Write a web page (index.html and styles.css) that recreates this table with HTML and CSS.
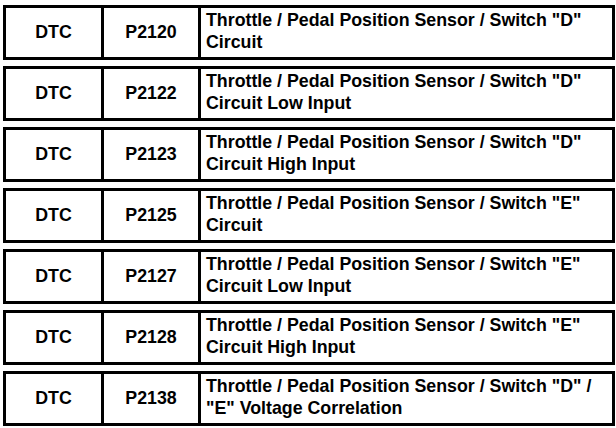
FILE: index.html
```html
<!DOCTYPE html>
<html lang="en">
<head>
<meta charset="utf-8">
<title>DTC list</title>
<link rel="stylesheet" href="styles.css">
</head>
<body>
<div class="dtc-list">
  <div class="dtc-row">
    <div class="cell label">DTC</div>
    <div class="cell code">P2120</div>
    <div class="cell desc">Throttle / Pedal Position Sensor / Switch "D" Circuit</div>
  </div>
  <div class="dtc-row">
    <div class="cell label">DTC</div>
    <div class="cell code">P2122</div>
    <div class="cell desc">Throttle / Pedal Position Sensor / Switch "D" Circuit Low Input</div>
  </div>
  <div class="dtc-row">
    <div class="cell label">DTC</div>
    <div class="cell code">P2123</div>
    <div class="cell desc">Throttle / Pedal Position Sensor / Switch "D" Circuit High Input</div>
  </div>
  <div class="dtc-row">
    <div class="cell label">DTC</div>
    <div class="cell code">P2125</div>
    <div class="cell desc">Throttle / Pedal Position Sensor / Switch "E" Circuit</div>
  </div>
  <div class="dtc-row">
    <div class="cell label">DTC</div>
    <div class="cell code">P2127</div>
    <div class="cell desc">Throttle / Pedal Position Sensor / Switch "E" Circuit Low Input</div>
  </div>
  <div class="dtc-row">
    <div class="cell label">DTC</div>
    <div class="cell code">P2128</div>
    <div class="cell desc">Throttle / Pedal Position Sensor / Switch "E" Circuit High Input</div>
  </div>
  <div class="dtc-row">
    <div class="cell label">DTC</div>
    <div class="cell code">P2138</div>
    <div class="cell desc">Throttle / Pedal Position Sensor / Switch "D" / "E" Voltage Correlation</div>
  </div>
</div>
</body>
</html>
```
FILE: styles.css
```css
* { box-sizing: border-box; }
html, body { background: #fff; }
body {
  margin: 0;
  padding: 5px 0 0 3px;
  font-family: "Liberation Sans", Arial, sans-serif;
  font-weight: bold;
  font-size: 17.8px;
  color: #000;
}
.dtc-list {
  display: flex;
  flex-direction: column;
  gap: 6px;
  width: 612px;
}
.dtc-row {
  display: grid;
  grid-template-columns: 95px 97px 1fr;
  height: 55px;
  border: 3px solid #000;
}
.cell {
  display: flex;
  align-items: center;
  justify-content: center;
}
.code, .desc { border-left: 3px solid #000; }
.desc {
  justify-content: flex-start;
  align-items: flex-start;
  padding: 1px 4px 0 5px;
  line-height: 22px;
}
```
